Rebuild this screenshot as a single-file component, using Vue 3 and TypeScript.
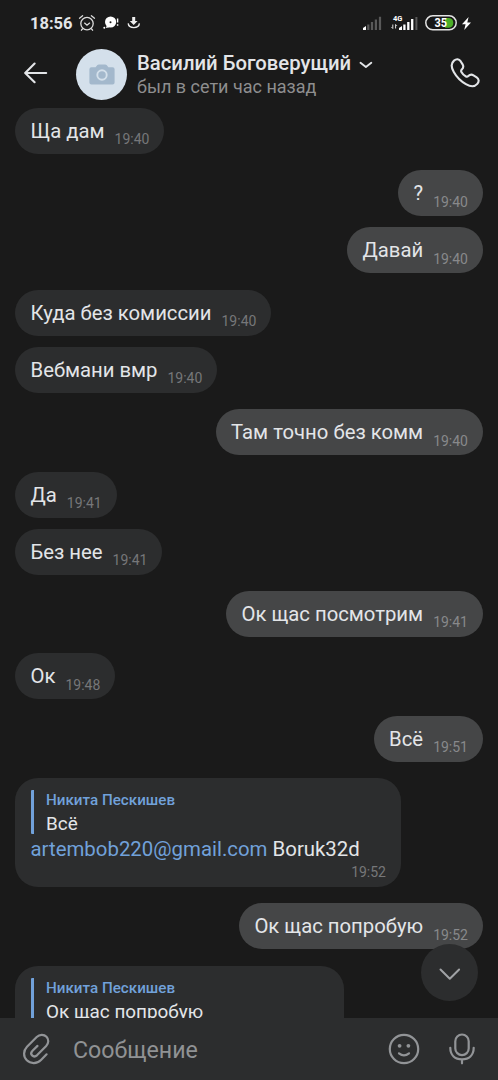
<script setup lang="ts">
interface Message {
  text: string
  time: string
  out?: boolean
  link?: string
  reply?: { author: string; text: string }
}

const messages: Message[] = [
  { text: 'Ща дам', time: '19:40' },
  { text: '?', time: '19:40', out: true },
  { text: 'Давай', time: '19:40', out: true },
  { text: 'Куда без комиссии', time: '19:40' },
  { text: 'Вебмани вмр', time: '19:40' },
  { text: 'Там точно без комм', time: '19:40', out: true },
  { text: 'Да', time: '19:41' },
  { text: 'Без нее', time: '19:41' },
  { text: 'Ок щас посмотрим', time: '19:41', out: true },
  { text: 'Ок', time: '19:48' },
  { text: 'Всё', time: '19:51', out: true },
  {
    text: 'Boruk32d',
    link: 'artembob220@gmail.com',
    time: '19:52',
    reply: { author: 'Никита Пескишев', text: 'Всё' },
  },
  { text: 'Ок щас попробую', time: '19:52', out: true },
  { text: '', time: '', reply: { author: 'Никита Пескишев', text: 'Ок щас попробую' } },
]

function sameSender(index: number): boolean {
  return index > 0 && !!messages[index].out === !!messages[index - 1].out
}
</script>

<template>
  <div class="screen">
    <div class="status">
      <span class="clock">18:56</span>
      <svg class="alarm" viewBox="0 0 18 18" width="18" height="18" fill="none" stroke="#dcdcdc" stroke-width="1.3" stroke-linecap="round">
        <circle cx="9" cy="9.6" r="6.2" />
        <path d="M1.5 4.2 4.6 1.7M16.5 4.2 13.4 1.7M6.6 9.1 9 11.2l2.6-2.1M4.4 15l-1 1.2M13.6 15l1 1.2" />
      </svg>
      <svg class="notice" viewBox="0 0 17 14" width="17" height="14">
        <circle cx="7.6" cy="6" r="5.6" fill="#fff" />
        <path d="M3.8 9.2 3 12l3.4-.8z" fill="#fff" />
        <circle cx="1.3" cy="11.8" r="1" fill="#fff" />
        <circle cx="7.5" cy="6.2" r="1" fill="#1a1a1a" />
        <path d="M14.6 2.6v4M14.6 8.3v1.5" stroke="#fff" stroke-width="1.4" />
      </svg>
      <svg class="download" viewBox="0 0 14 14" width="14" height="14">
        <path d="M5.2 1h3v4h2.4L6.7 9 2.8 5h2.4z" fill="#eee" />
        <path d="M1.2 7.4C1.8 13 11.8 13 12.4 7.4" fill="none" stroke="#eee" stroke-width="1.4" />
      </svg>
      <svg class="signal" viewBox="0 0 19 14" width="19" height="14">
        <path d="M0 14v-2l3-2v4z" fill="#fff" />
        <path d="M5.3 14V8.6M9 14V6M12.9 14V3.4M17 14V.8" stroke="#595959" stroke-width="2.2" />
      </svg>
      <svg class="lte" viewBox="0 0 28 16" width="28" height="16">
        <text x="2" y="6" class="lte-text">4G</text>
        <path d="M1.8 9.5v4M.5 12.2l1.3 1.3M4.6 13.5v-4M5.9 10.8 4.6 9.5" stroke="#ddd" stroke-width="1" fill="none" />
        <path d="M8 15v-2l3-2v4z" fill="#fff" />
        <path d="M13.4 15V9.6M17.3 15V7M21.2 15V4" stroke="#fff" stroke-width="2.3" />
        <path d="M25.4 15V2" stroke="#595959" stroke-width="2" />
      </svg>
      <svg class="battery" viewBox="0 0 32 16" width="32" height="16">
        <rect x=".8" y=".8" width="30.4" height="14" rx="7" fill="#171717" stroke="#e4e4e4" stroke-width="1.5" />
        <path d="M20 2.9h4a5 5 0 0 1 0 9.9h-4z" fill="#4cae28" />
        <text x="9.5" y="12.2" textLength="12.5" lengthAdjust="spacingAndGlyphs" class="charge">35</text>
      </svg>
      <svg class="bolt" viewBox="0 0 9 13" width="9" height="13">
        <path d="M6.6 0 0 7.2h3.6L2.2 13 9 5.4H5.3z" fill="#fff" />
      </svg>
    </div>

    <header class="header">
      <svg class="back" viewBox="0 0 24 22" width="24" height="22" fill="none" stroke="#e3e5e8" stroke-width="2.1" stroke-linecap="round" stroke-linejoin="round">
        <path d="M22.2 11H1.4M10.6 1.6 1.2 11l9.4 9.2" />
      </svg>
      <div class="avatar">
        <svg viewBox="0 0 26 21" width="26" height="21">
          <path d="M2.4 3.2h4.2L8.4 1Q9 .4 9.8.4h6.4q.8 0 1.4.6l1.8 2.2h4.2q2 0 2 2v13.2q0 2-2 2H2.4q-2 0-2-2V5.2q0-2 2-2z" fill="#a3b8cc" />
          <circle cx="13" cy="11" r="4.7" fill="none" stroke="#d4e0eb" stroke-width="1.9" />
        </svg>
      </div>
      <div class="peer">
        <div class="name">
          <span>Василий Боговерущий</span>
          <svg class="more" viewBox="0 0 14 8" width="14" height="8" fill="none" stroke="#e3e5e8" stroke-width="1.9" stroke-linecap="round" stroke-linejoin="round">
            <path d="m1.5 1.8 5.4 4.2 5.4-4.2" />
          </svg>
        </div>
        <div class="seen">был в сети час назад</div>
      </div>
      <svg class="call" viewBox="0 0 30 30" width="30" height="30" fill="none" stroke="#e3e5e8" stroke-width="2.1" stroke-linejoin="round">
        <path d="M4 2.6C6.4.6 9 .9 10.6 3.2l2 3.2c1.2 2 .8 3.6-.8 5.2-.8.8-.9 1.4-.4 2.3 1 1.8 2.8 3.6 4.6 4.6.9.5 1.5.4 2.3-.4 1.6-1.6 3.2-2 5.2-.8l3.2 2c2.3 1.6 2.6 4.2.6 6.6-2.6 3-6.6 3-11.4.2C10.9 23.3 6.6 19 3.8 14 1 9.2 1 5.2 4 2.6z" />
      </svg>
    </header>

    <main class="chat">
      <div
        v-for="(m, i) in messages"
        :key="i"
        class="bubble"
        :class="{ out: m.out, near: sameSender(i), quoted: m.reply, partial: m.reply && !m.text }"
      >
        <div v-if="m.reply" class="reply">
          <div class="author">{{ m.reply.author }}</div>
          <div class="quote">{{ m.reply.text }}</div>
        </div>
        <div class="text"><span v-if="m.link" class="link">{{ m.link }}</span>{{ m.link ? ' ' : '' }}{{ m.text }}</div>
        <div class="time">{{ m.time }}</div>
      </div>
      <div class="down">
        <svg viewBox="0 0 22 13" width="22" height="13" fill="none" stroke="#a0a2a5" stroke-width="2" stroke-linecap="round" stroke-linejoin="round">
          <path d="m1.5 1.5 9.3 9.3 9.3-9.3" />
        </svg>
      </div>
    </main>

    <footer class="composer">
      <svg class="clip" viewBox="0 0 28 32" width="28" height="32" fill="none" stroke="#929497" stroke-width="2.2" stroke-linecap="round" stroke-linejoin="round">
        <path d="M24.6 21.3 19 27C15 31 8.5 31 4.8 27.3S1.2 17.7 5 13.7L14.7 4C17.6 1.1 22 1.1 24.5 3.7S26.8 10.3 24.2 13L15.2 22.1C13.5 23.7 11.4 23.7 10.1 22.4S9 19.2 10.5 17.7L15.5 12.9" />
      </svg>
      <div class="hint">Сообщение</div>
      <svg class="smile" viewBox="0 0 32 32" width="32" height="32" fill="none" stroke="#929497" stroke-width="2.2" stroke-linecap="round">
        <circle cx="16" cy="16" r="14.2" />
        <path d="M11 20.3q5 4.2 10 0" />
        <circle cx="11.6" cy="12.8" r="1.9" fill="#929497" stroke="none" />
        <circle cx="20.4" cy="12.8" r="1.9" fill="#929497" stroke="none" />
      </svg>
      <svg class="mic" viewBox="0 0 26 32" width="26" height="32" fill="none" stroke="#929497" stroke-width="2.2" stroke-linecap="round">
        <rect x="6.3" y="1.5" width="13.4" height="20.6" rx="6.7" />
        <path d="M1.3 14.8c0 7.5 4.8 11.5 11.7 11.5s11.7-4 11.7-11.5M13 26.3v4" />
      </svg>
    </footer>
  </div>
</template>

<style>
html,
body {
  margin: 0;
  background: #1a1a1a;
}
</style>

<style scoped>
.screen {
  display: flex;
  flex-direction: column;
  width: 498px;
  height: 1080px;
  overflow: hidden;
  background: #1a1a1a;
  color: #e3e5e8;
  font-family: Roboto, "Noto Sans", sans-serif;
}
svg {
  display: block;
  flex: none;
}
.status {
  display: flex;
  align-items: center;
  box-sizing: border-box;
  height: 46px;
  padding: 0 27px 0 30px;
}
.clock {
  width: 42px;
  font-size: 16.5px;
  font-weight: 700;
  white-space: nowrap;
}
.alarm {
  margin-left: 6px;
}
.notice {
  margin-left: 7px;
}
.download {
  margin-left: 7px;
}
.signal {
  margin-left: auto;
}
.lte {
  margin-left: 9px;
}
.lte-text {
  font: 700 7.5px Roboto, sans-serif;
  fill: #fff;
}
.battery {
  margin-left: 6px;
}
.charge {
  font: 700 12.5px Roboto, sans-serif;
  fill: #fff;
}
.bolt {
  margin-left: 5px;
}
.header {
  display: flex;
  align-items: center;
  box-sizing: border-box;
  height: 62px;
  padding: 0 18px 9px 24px;
}
.avatar {
  display: flex;
  align-items: center;
  justify-content: center;
  width: 51px;
  height: 51px;
  margin: 4px 10px 0 28px;
  border-radius: 50%;
  background: #d4e0eb;
}
.peer {
  flex: 1;
  padding-top: 4px;
  white-space: nowrap;
}
.name {
  display: flex;
  align-items: center;
  gap: 8px;
  height: 24px;
  font-size: 20.3px;
  font-weight: 500;
}
.more {
  margin-top: 4px;
}
.seen {
  height: 24px;
  line-height: 24px;
  font-size: 18px;
  color: #8e8e8f;
}
.chat {
  position: relative;
  display: flex;
  flex: 1;
  flex-direction: column;
  align-items: flex-start;
  min-height: 0;
  padding: 0 15px;
  overflow: hidden;
}
.bubble {
  display: flex;
  flex: none;
  box-sizing: border-box;
  height: 46px;
  margin-top: 16.35px;
  padding: 0 15px 0 15.5px;
  border-radius: 23px;
  background: #2c2d2e;
  white-space: nowrap;
}
.bubble:first-child {
  margin-top: 0;
}
.bubble.near {
  margin-top: 11.1px;
}
.bubble.out {
  align-self: flex-end;
  background: #454647;
}
.text {
  line-height: 47px;
  font-size: 20.3px;
}
.time {
  margin-left: 10px;
  padding-top: 23.3px;
  line-height: 17px;
  font-size: 14px;
  color: #767779;
}
.out .time {
  color: #88898b;
}
.link,
.author {
  color: #71a1da;
}
.bubble.quoted {
  flex-direction: column;
  width: 386px;
  height: 109px;
  padding-top: 12.2px;
}
.bubble.partial {
  width: 329px;
}
.reply {
  height: 44px;
  padding-left: 12.5px;
  border-left: 3px solid #71a1da;
  border-radius: 1px;
}
.author {
  height: 20px;
  line-height: 20px;
  font-size: 15.2px;
  font-weight: 500;
}
.quote {
  height: 24px;
  line-height: 27px;
  font-size: 18.9px;
}
.quoted .text {
  height: 30px;
  line-height: 31px;
  font-size: 20.4px;
}
.quoted .time {
  align-self: flex-end;
  padding-top: 0;
}
.down {
  position: absolute;
  right: 20px;
  bottom: 17px;
  display: flex;
  align-items: center;
  justify-content: center;
  width: 57px;
  height: 57px;
  padding-top: 3px;
  box-sizing: border-box;
  border-radius: 50%;
  background: #2c2d2e;
}
.composer {
  display: flex;
  flex: none;
  align-items: center;
  box-sizing: border-box;
  height: 62px;
  padding: 0 23px 0 22px;
  background: #2c2d2e;
}
.hint {
  flex: 1;
  margin-left: 23px;
  padding-top: 2px;
  font-size: 23.2px;
  color: #909294;
}
.smile {
  margin-right: 29px;
}
</style>
